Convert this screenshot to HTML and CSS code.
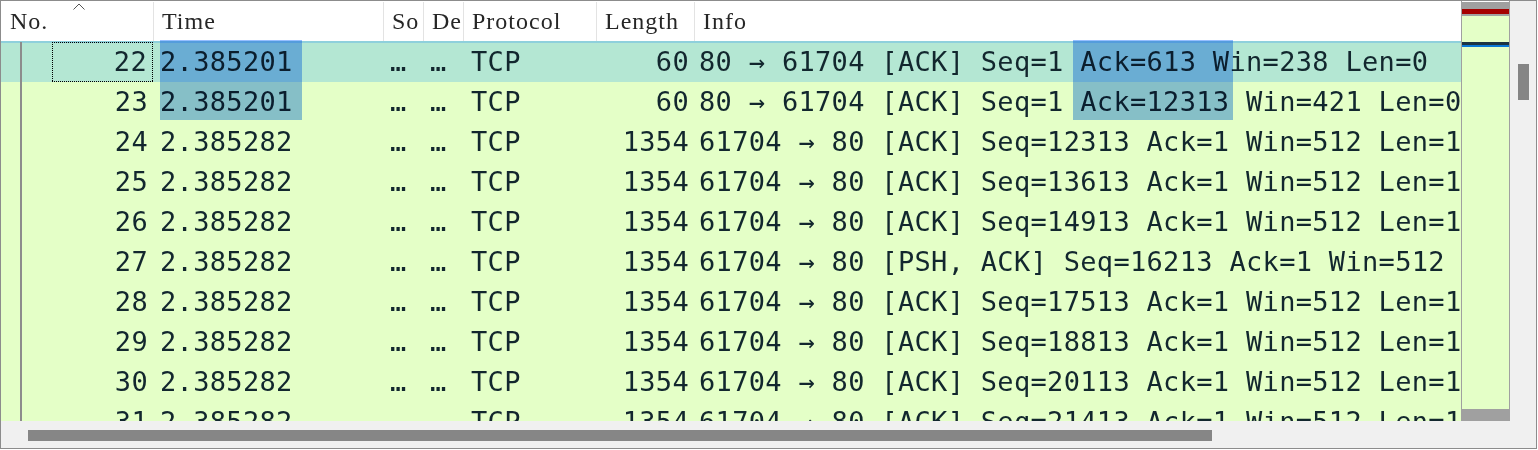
FILE: index.html
```html
<!DOCTYPE html>
<html>
<head>
<meta charset="utf-8">
<link rel="stylesheet" href="styles.css">
</head>
<body>
<div class="win">
  <div class="top">
    <div class="list">
      <div class="header">
        <div class="hcell hno">No.<svg class="sort" width="12" height="7" viewBox="0 0 12 7"><polyline points="0.5,6.5 6,1 11.5,6.5" fill="none" stroke="#555" stroke-width="1"/></svg></div>
        <div class="hcell">Time</div>
        <div class="hcell">So</div>
        <div class="hcell">De</div>
        <div class="hcell">Protocol</div>
        <div class="hcell">Length</div>
        <div class="hcell hlast">Info</div>
      </div>
      <div class="rows">
        <div class="row sel">
          <div class="no"><span class="rel"></span><span class="focus">22</span></div>
          <div class="time">2.385201</div><div class="so">…</div><div class="de">…</div><div class="proto">TCP</div><div class="len">60</div>
          <div class="info">80 → 61704 [ACK] Seq=1 Ack=613 Win=238 Len=0</div>
        </div>
        <div class="row">
          <div class="no"><span class="rel"></span><span class="num">23</span></div>
          <div class="time">2.385201</div><div class="so">…</div><div class="de">…</div><div class="proto">TCP</div><div class="len">60</div>
          <div class="info">80 → 61704 [ACK] Seq=1 Ack=12313 Win=421 Len=0</div>
        </div>
        <div class="row">
          <div class="no"><span class="rel"></span><span class="num">24</span></div>
          <div class="time">2.385282</div><div class="so">…</div><div class="de">…</div><div class="proto">TCP</div><div class="len">1354</div>
          <div class="info">61704 → 80 [ACK] Seq=12313 Ack=1 Win=512 Len=1300</div>
        </div>
        <div class="row">
          <div class="no"><span class="rel"></span><span class="num">25</span></div>
          <div class="time">2.385282</div><div class="so">…</div><div class="de">…</div><div class="proto">TCP</div><div class="len">1354</div>
          <div class="info">61704 → 80 [ACK] Seq=13613 Ack=1 Win=512 Len=1300</div>
        </div>
        <div class="row">
          <div class="no"><span class="rel"></span><span class="num">26</span></div>
          <div class="time">2.385282</div><div class="so">…</div><div class="de">…</div><div class="proto">TCP</div><div class="len">1354</div>
          <div class="info">61704 → 80 [ACK] Seq=14913 Ack=1 Win=512 Len=1300</div>
        </div>
        <div class="row">
          <div class="no"><span class="rel"></span><span class="num">27</span></div>
          <div class="time">2.385282</div><div class="so">…</div><div class="de">…</div><div class="proto">TCP</div><div class="len">1354</div>
          <div class="info">61704 → 80 [PSH, ACK] Seq=16213 Ack=1 Win=512 Len=1300</div>
        </div>
        <div class="row">
          <div class="no"><span class="rel"></span><span class="num">28</span></div>
          <div class="time">2.385282</div><div class="so">…</div><div class="de">…</div><div class="proto">TCP</div><div class="len">1354</div>
          <div class="info">61704 → 80 [ACK] Seq=17513 Ack=1 Win=512 Len=1300</div>
        </div>
        <div class="row">
          <div class="no"><span class="rel"></span><span class="num">29</span></div>
          <div class="time">2.385282</div><div class="so">…</div><div class="de">…</div><div class="proto">TCP</div><div class="len">1354</div>
          <div class="info">61704 → 80 [ACK] Seq=18813 Ack=1 Win=512 Len=1300</div>
        </div>
        <div class="row">
          <div class="no"><span class="rel"></span><span class="num">30</span></div>
          <div class="time">2.385282</div><div class="so">…</div><div class="de">…</div><div class="proto">TCP</div><div class="len">1354</div>
          <div class="info">61704 → 80 [ACK] Seq=20113 Ack=1 Win=512 Len=1300</div>
        </div>
        <div class="row">
          <div class="no"><span class="rel"></span><span class="num">31</span></div>
          <div class="time">2.385282</div><div class="so">…</div><div class="de">…</div><div class="proto">TCP</div><div class="len">1354</div>
          <div class="info">61704 → 80 [ACK] Seq=21413 Ack=1 Win=512 Len=1300</div>
        </div>
        <div class="hl hl-time"></div>
        <div class="hl hl-ack"></div>
      </div>
    </div>
    <div class="mm">
      <div class="mm-top"><div class="mm-red"></div></div>
      <div class="mm-cur"></div>
      <div class="mm-fill"></div>
      <div class="mm-bot"></div>
    </div>
    <div class="vs"><div class="vthumb"></div></div>
  </div>
  <div class="hs"><div class="hthumb"></div></div>
</div>
</body>
</html>
```

FILE: styles.css
```css
html, body {
  margin: 0;
  padding: 0;
  background: #ffffff;
}

.win {
  width: 1537px;
  height: 449px;
  box-sizing: border-box;
  border: 1px solid #8c8c8c;
  display: flex;
  flex-direction: column;
  background: #f0f0f0;
}

.top {
  display: flex;
  height: 420px;
}

.list {
  width: 1460px;
  overflow: hidden;
  background: #e4ffc7;
  display: flex;
  flex-direction: column;
}

.header {
  position: relative;
  height: 41px;
  flex: none;
  box-sizing: border-box;
  border-bottom: 1px solid #8fd0dc;
  background: #ffffff;
  display: grid;
  grid-template-columns: 153px 230px 40px 40px 133px 98px minmax(0, 1fr);
}

.hcell {
  box-sizing: border-box;
  border-right: 1px solid #e3e3e3;
  margin-top: 1px;
  padding-left: 8px;
  font-family: "Liberation Serif", "DejaVu Serif", serif;
  font-size: 24px;
  letter-spacing: 1px;
  line-height: 39px;
  color: #262626;
  white-space: nowrap;
  overflow: hidden;
}

.hno {
  padding-left: 9px;
}

.hlast {
  border-right: none;
}

.sort {
  position: absolute;
  left: 72px;
  top: 2px;
}

.rows {
  position: relative;
  flex: none;
}

.row {
  display: grid;
  grid-template-columns: 153px 230px 40px 40px 133px 98px minmax(0, 1fr);
  height: 40px;
  line-height: 40px;
  font-family: "DejaVu Sans Mono", "Liberation Mono", monospace;
  font-size: 27px;
  letter-spacing: 0.32px;
  color: #12272e;
  background: #e4ffc7;
  white-space: nowrap;
}

.row.sel {
  background: #b4e7d3;
  box-shadow: inset 0 1px #8fd0dc;
}

.no {
  display: flex;
}

.rel {
  width: 2px;
  margin-left: 19px;
  background: #8c8c8c;
}

.num {
  margin-left: auto;
  padding-right: 6px;
}

.focus {
  margin-left: auto;
  margin-right: 1px;
  width: 101px;
  box-sizing: border-box;
  text-align: right;
  padding-right: 6px;
  background:
    repeating-linear-gradient(90deg, #000 0 1px, transparent 1px 2px) top left / 100% 1px no-repeat,
    repeating-linear-gradient(90deg, #000 0 1px, transparent 1px 2px) bottom left / 100% 1px no-repeat,
    repeating-linear-gradient(180deg, #000 0 1px, transparent 1px 2px) top left / 1px 100% no-repeat,
    repeating-linear-gradient(180deg, #000 0 1px, transparent 1px 2px) top right / 1px 100% no-repeat;
}

.time {
  padding-left: 6px;
}

.so, .de {
  padding-left: 6px;
  overflow: hidden;
}

.proto {
  padding-left: 7px;
}

.len {
  text-align: right;
  padding-right: 6px;
}

.info {
  padding-left: 4px;
  overflow: visible;
}

.hl {
  position: absolute;
  top: -2px;
  height: 80px;
  background: #96bfff;
  mix-blend-mode: multiply;
}

.hl-time {
  left: 159px;
  width: 142px;
}

.hl-ack {
  left: 1072px;
  width: 160px;
}

.mm {
  width: 49px;
  flex: none;
  box-sizing: border-box;
  border-left: 1px solid #a0a0a0;
  border-right: 1px solid #a0a0a0;
  background: #e4ffc7;
  display: flex;
  flex-direction: column;
}

.mm-top {
  height: 15px;
  box-sizing: border-box;
  border-top: 1px solid #ffffff;
  background: #a0a0a0;
  padding-top: 7px;
}

.mm-red {
  height: 5px;
  background: #a50000;
}

.mm-cur {
  margin-top: 26px;
  height: 3px;
  background: #1b3444;
  border-bottom: 2px solid #0a78d7;
}

.mm-fill {
  flex: 1;
}

.mm-bot {
  height: 12px;
  background: #a0a0a0;
}

.vs {
  width: 26px;
  flex: none;
  box-sizing: border-box;
  background: #f0f0f0;
  padding-top: 63px;
  padding-left: 8px;
}

.vthumb {
  width: 11px;
  height: 36px;
  background: #858585;
}

.hs {
  height: 27px;
  flex: none;
  box-sizing: border-box;
  background: #f0f0f0;
  padding: 9px 0 0 27px;
}

.hthumb {
  width: 1184px;
  height: 11px;
  background: #868686;
}
```
